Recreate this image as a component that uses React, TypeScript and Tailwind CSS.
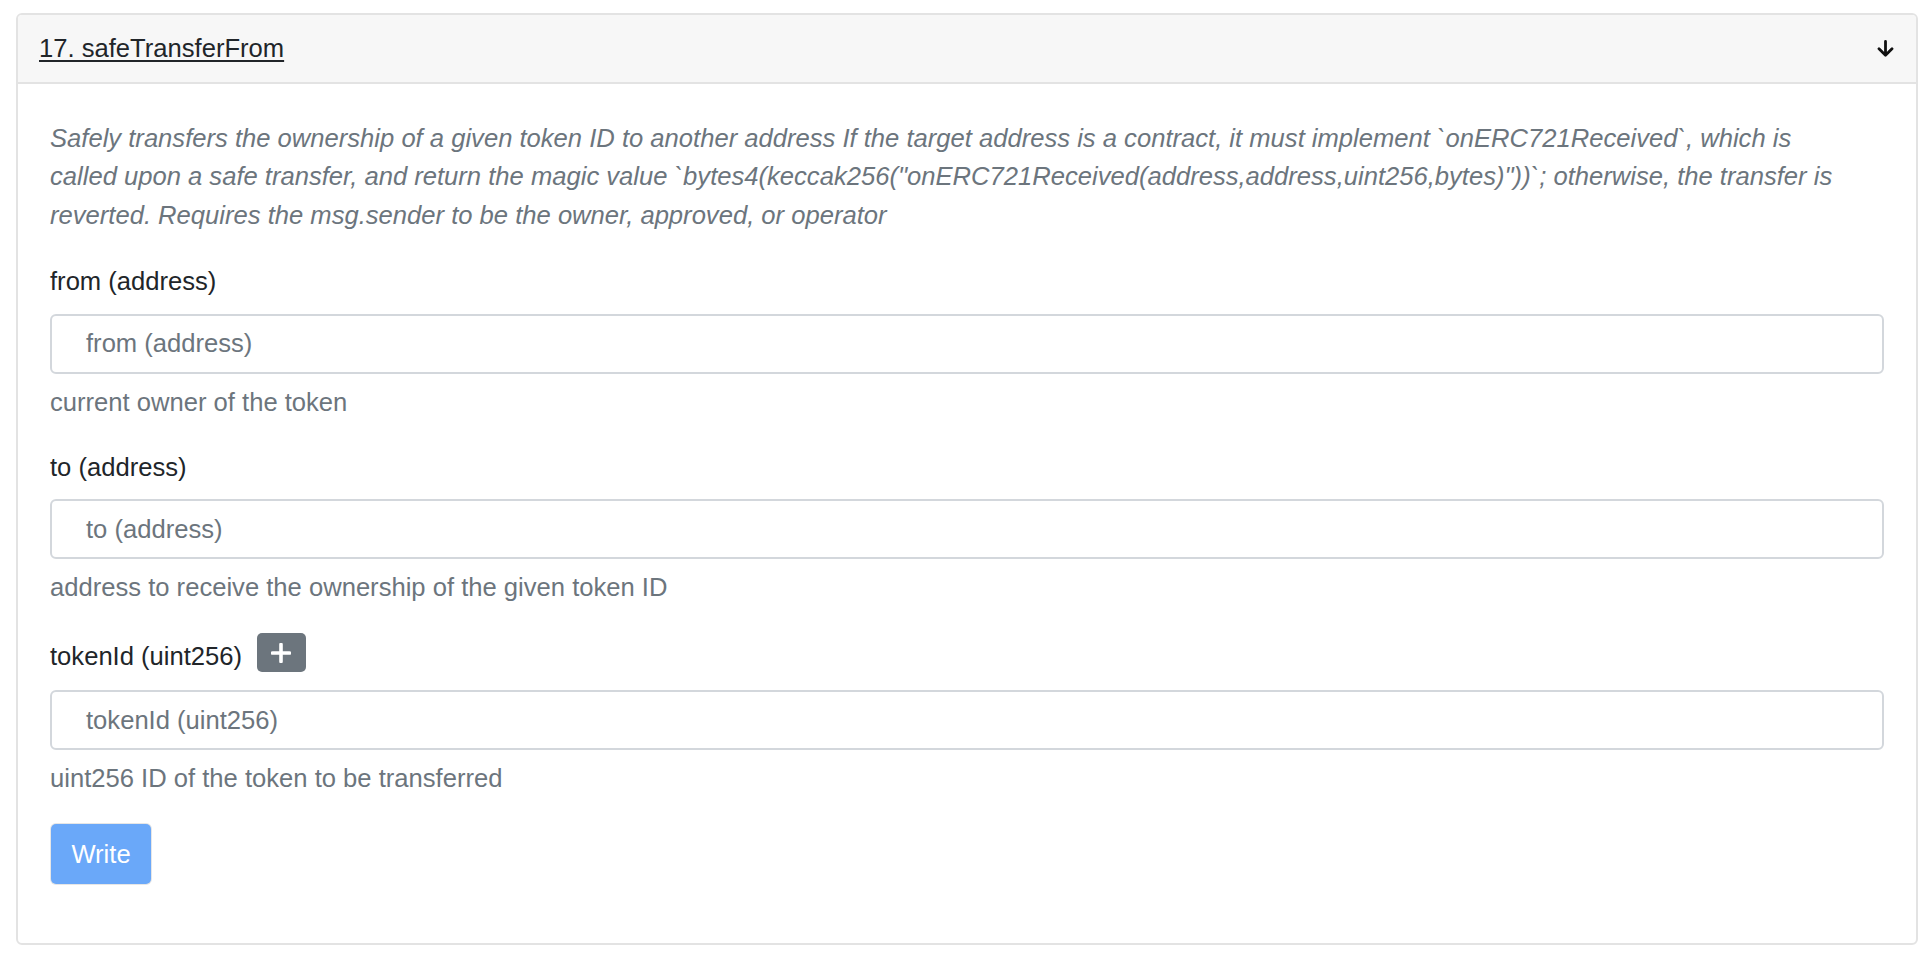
import React from "react";

const font = { fontFamily: '"Liberation Sans", Arial, Helvetica, sans-serif' };

function Field({
  label,
  help,
  extra,
}: {
  label: string;
  help: string;
  extra?: boolean;
}) {
  return (
    <div className="mb-[26.6px]">
      {extra ? (
        <div className="flex items-start mb-[14.6px]">
          <div className="mt-[4px] text-[25.6px] leading-[38.4px] text-[#212529]">{label}</div>
          <div className="ml-[14.5px] w-[49px] h-[39px] rounded-[5px] bg-[#6c757d] flex items-center justify-center">
            <svg width="20" height="20" viewBox="0 0 20 20">
              <path d="M10 1.5V18.5M1.5 10H18.5" stroke="#ffffff" strokeWidth="3.6" strokeLinecap="round" />
            </svg>
          </div>
        </div>
      ) : (
        <div className="text-[25.6px] leading-[38.4px] text-[#212529] mb-[13px]">{label}</div>
      )}
      <div className="h-[60px] w-full rounded-[6px] border-2 border-[#d3d7dc] bg-white flex items-center pl-[34px] text-[25.6px] text-[#6c757d]">
        {label}
      </div>
      <div className="mt-[9px] text-[25.6px] leading-[38.4px] text-[#6c757d]">{help}</div>
    </div>
  );
}

export default function App() {
  return (
    <div className="w-[1932px] h-[966px] bg-white pt-[13px] pl-[16px]" style={font}>
      <div className="w-[1902px] border-2 border-[#e3e3e3] rounded-[6px] overflow-hidden">
        <div className="h-[69px] bg-[#f7f7f7] border-b-2 border-[#e3e3e3] flex items-center justify-between pl-[21px] pr-[22px]">
          <span className="text-[25.6px] leading-[38.4px] text-[#212529] underline underline-offset-[3px]">
            17. safeTransferFrom
          </span>
          <svg width="17" height="17" viewBox="0 0 17 17">
            <path
              d="M8.5 1.5V15M2 8.8L8.5 15.2L15 8.8"
              stroke="#111111"
              strokeWidth="2.8"
              fill="none"
              strokeLinecap="round"
              strokeLinejoin="round"
            />
          </svg>
        </div>
        <div className="pt-[35px] pl-[32px] pr-[32px] pb-[59px]">
          <p className="italic text-[25.6px] leading-[38.4px] text-[#6c757d] mb-[28px] whitespace-nowrap">
            Safely transfers the ownership of a given token ID to another address If the target address is a contract, it must implement `onERC721Received`, which is
            <br />
            called upon a safe transfer, and return the magic value `bytes4(keccak256("onERC721Received(address,address,uint256,bytes)"))`; otherwise, the transfer is
            <br />
            reverted. Requires the msg.sender to be the owner, approved, or operator
          </p>
          <Field label="from (address)" help="current owner of the token" />
          <Field label="to (address)" help="address to receive the ownership of the given token ID" />
          <Field label="tokenId (uint256)" help="uint256 ID of the token to be transferred" extra />
          <button className="ml-[1px] w-[100px] h-[60px] rounded-[5px] bg-[#6aa8f9] ring-1 ring-[#e6e6e6] text-white text-[25.6px] flex items-center justify-center">
            Write
          </button>
        </div>
      </div>
    </div>
  );
}
